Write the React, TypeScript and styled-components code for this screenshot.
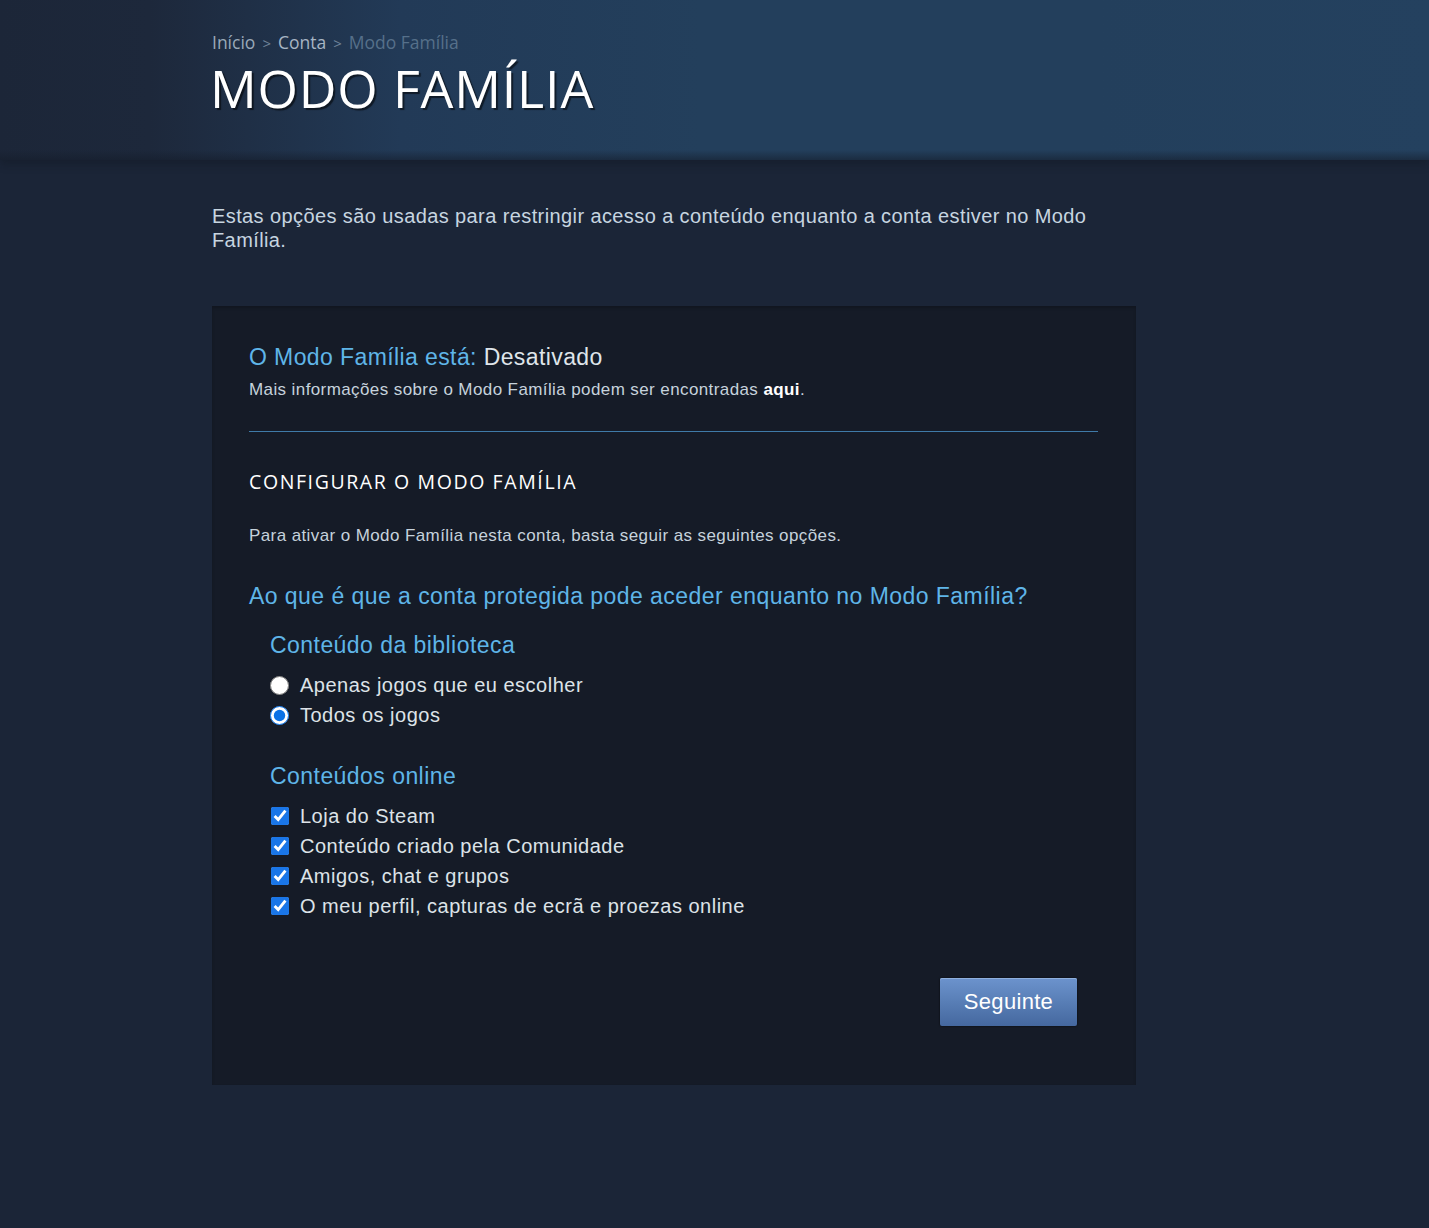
import React, { useState } from 'react';
import styled, { createGlobalStyle } from 'styled-components';

const GlobalStyle = createGlobalStyle`
  html, body {
    margin: 0;
    padding: 0;
    background: #1b2537;
    min-height: 100%;
  }
  body {
    font-family: "Liberation Sans", Arial, sans-serif;
  }
`;

type Access = 'chosen' | 'all';

const onlineItems = [
  'Loja do Steam',
  'Conteúdo criado pela Comunidade',
  'Amigos, chat e grupos',
  'O meu perfil, capturas de ecrã e proezas online',
];

const App: React.FC = () => {
  const [access, setAccess] = useState<Access>('all');
  const [online, setOnline] = useState<boolean[]>(onlineItems.map(() => true));

  const toggleOnline = (index: number): void => {
    setOnline((prev) => prev.map((value, i) => (i === index ? !value : value)));
  };

  return (
    <Page>
      <GlobalStyle />
      <Header>
        <HeaderInner>
          <Breadcrumbs>
            <Crumb>Início</Crumb>
            <Separator>&gt;</Separator>
            <Crumb $bright>Conta</Crumb>
            <Separator>&gt;</Separator>
            <Crumb $current>Modo Família</Crumb>
          </Breadcrumbs>
          <Title>MODO FAMÍLIA</Title>
        </HeaderInner>
      </Header>

      <Content>
        <Intro>
          Estas opções são usadas para restringir acesso a conteúdo enquanto a conta estiver no Modo
          Família.
        </Intro>

        <Panel>
          <StatusLine>
            <Highlight>O Modo Família está: </Highlight>
            Desativado
          </StatusLine>
          <SmallText $gap={9}>
            Mais informações sobre o Modo Família podem ser encontradas <Link>aqui</Link>.
          </SmallText>

          <Divider />

          <SectionTitle>CONFIGURAR O MODO FAMÍLIA</SectionTitle>
          <SmallText $gap={31}>
            Para ativar o Modo Família nesta conta, basta seguir as seguintes opções.
          </SmallText>

          <Question>Ao que é que a conta protegida pode aceder enquanto no Modo Família?</Question>

          <Group>
            <GroupTitle>Conteúdo da biblioteca</GroupTitle>
            <OptionList>
              <Option>
                <Radio
                  type="radio"
                  name="library"
                  checked={access === 'chosen'}
                  onChange={() => setAccess('chosen')}
                />
                Apenas jogos que eu escolher
              </Option>
              <Option>
                <Radio
                  type="radio"
                  name="library"
                  checked={access === 'all'}
                  onChange={() => setAccess('all')}
                />
                Todos os jogos
              </Option>
            </OptionList>
          </Group>

          <Group>
            <GroupTitle>Conteúdos online</GroupTitle>
            <OptionList>
              {onlineItems.map((label, index) => (
                <Option key={label}>
                  <Checkbox
                    type="checkbox"
                    checked={online[index]}
                    onChange={() => toggleOnline(index)}
                  />
                  {label}
                </Option>
              ))}
            </OptionList>
          </Group>

          <Actions>
            <NextButton type="button">Seguinte</NextButton>
          </Actions>
        </Panel>
      </Content>
    </Page>
  );
};

const Page = styled.div`
  min-height: 1228px;
  background: #1b2537;
`;

const Header = styled.header`
  height: 160px;
  background:
    linear-gradient(to bottom, rgba(0, 0, 0, 0) 150px, rgba(20, 28, 42, 0.55) 160px),
    linear-gradient(to right, #1c2638 0px, #1d283b 150px, #223a57 400px, #233f5c 700px, #233f5c 1100px, #24415f 1429px);
  box-shadow: 0 4px 8px rgba(14, 20, 30, 0.35);
`;

const HeaderInner = styled.div`
  padding: 31px 0 0 212px;
`;

const Breadcrumbs = styled.div`
  display: flex;
  align-items: baseline;
  gap: 7px;
  font-family: "Open Sans", "Noto Sans", sans-serif;
  font-size: 17.5px;
  line-height: 22px;
`;

const Crumb = styled.span<{ $bright?: boolean; $current?: boolean }>`
  color: ${({ $bright, $current }) => ($current ? '#56708a' : $bright ? '#a7b5c4' : '#9aa9b8')};
`;

const Separator = styled.span`
  color: #6f8399;
  font-size: 15px;
`;

const Title = styled.h1`
  margin: 2px 0 0 -2px;
  font-family: "Open Sans", "Noto Sans", sans-serif;
  font-weight: 400;
  font-size: 52px;
  line-height: 64px;
  letter-spacing: 0.8px;
  color: #ffffff;
  text-shadow: 2px 2px 1px rgba(0, 0, 0, 0.55);
`;

const Content = styled.main`
  padding: 44px 0 0 212px;
  width: 924px;
`;

const Intro = styled.p`
  margin: 0;
  font-size: 20px;
  letter-spacing: 0.4px;
  line-height: 24px;
  color: #c7d5e0;
  width: 900px;
`;

const Panel = styled.section`
  margin-top: 54px;
  background: #151b27;
  padding: 37px 38px 59px 37px;
  box-shadow: inset 0 2px 3px rgba(0, 0, 0, 0.2);
`;

const StatusLine = styled.div`
  font-size: 23px;
  letter-spacing: 0.4px;
  line-height: 28px;
  color: #dfe5ea;
`;

const Highlight = styled.span`
  color: #5fb5e8;
`;

const SmallText = styled.p<{ $gap?: number }>`
  margin: ${({ $gap }) => $gap ?? 5}px 0 0;
  font-size: 17px;
  letter-spacing: 0.4px;
  line-height: 20px;
  color: #c6d2dc;
`;

const Link = styled.span`
  color: #ffffff;
  font-weight: 600;
`;

const Divider = styled.div`
  margin-top: 31px;
  height: 1px;
  background: #3f7aa8;
`;

const SectionTitle = styled.h2`
  margin: 37px 0 0;
  font-family: "Open Sans", "Noto Sans", sans-serif;
  font-weight: 400;
  font-size: 19.5px;
  line-height: 26px;
  letter-spacing: 1.6px;
  color: #ffffff;
`;

const Question = styled.h3`
  margin: 36px 0 0;
  font-weight: 400;
  font-size: 23px;
  letter-spacing: 0.45px;
  line-height: 28px;
  color: #5fb5e8;
`;

const Group = styled.div`
  padding-left: 21px;
  margin-top: 21px;
  & + & {
    margin-top: 32px;
  }
`;

const GroupTitle = styled.h4`
  margin: 0;
  font-weight: 400;
  font-size: 23px;
  letter-spacing: 0.45px;
  line-height: 28px;
  color: #5fb5e8;
`;

const OptionList = styled.div`
  display: flex;
  flex-direction: column;
  margin-top: 11px;
`;

const Option = styled.label`
  display: flex;
  align-items: center;
  gap: 11px;
  height: 30px;
  font-size: 20px;
  letter-spacing: 0.5px;
  color: #dde3e8;
  cursor: pointer;
`;

const Radio = styled.input`
  margin: 0;
  width: 19px;
  height: 19px;
  accent-color: #0b72e6;
`;

const Checkbox = styled.input`
  margin: 0 0 0 1px;
  width: 18px;
  height: 18px;
  accent-color: #1a76e8;
`;

const Actions = styled.div`
  display: flex;
  justify-content: flex-end;
  margin-top: 57px;
  padding-right: 21px;
`;

const NextButton = styled.button`
  width: 137px;
  height: 48px;
  border: none;
  border-radius: 2px;
  padding: 0;
  background: linear-gradient(to bottom, #6c93cd 0%, #5a80b8 45%, #45689f 100%);
  box-shadow: 0 1px 0 #8fb0de inset, 0 0 2px rgba(0, 0, 0, 0.8);
  color: #ffffff;
  font-family: "Liberation Sans", Arial, sans-serif;
  font-size: 22px;
  letter-spacing: 0.3px;
  cursor: pointer;
`;

export default App;
